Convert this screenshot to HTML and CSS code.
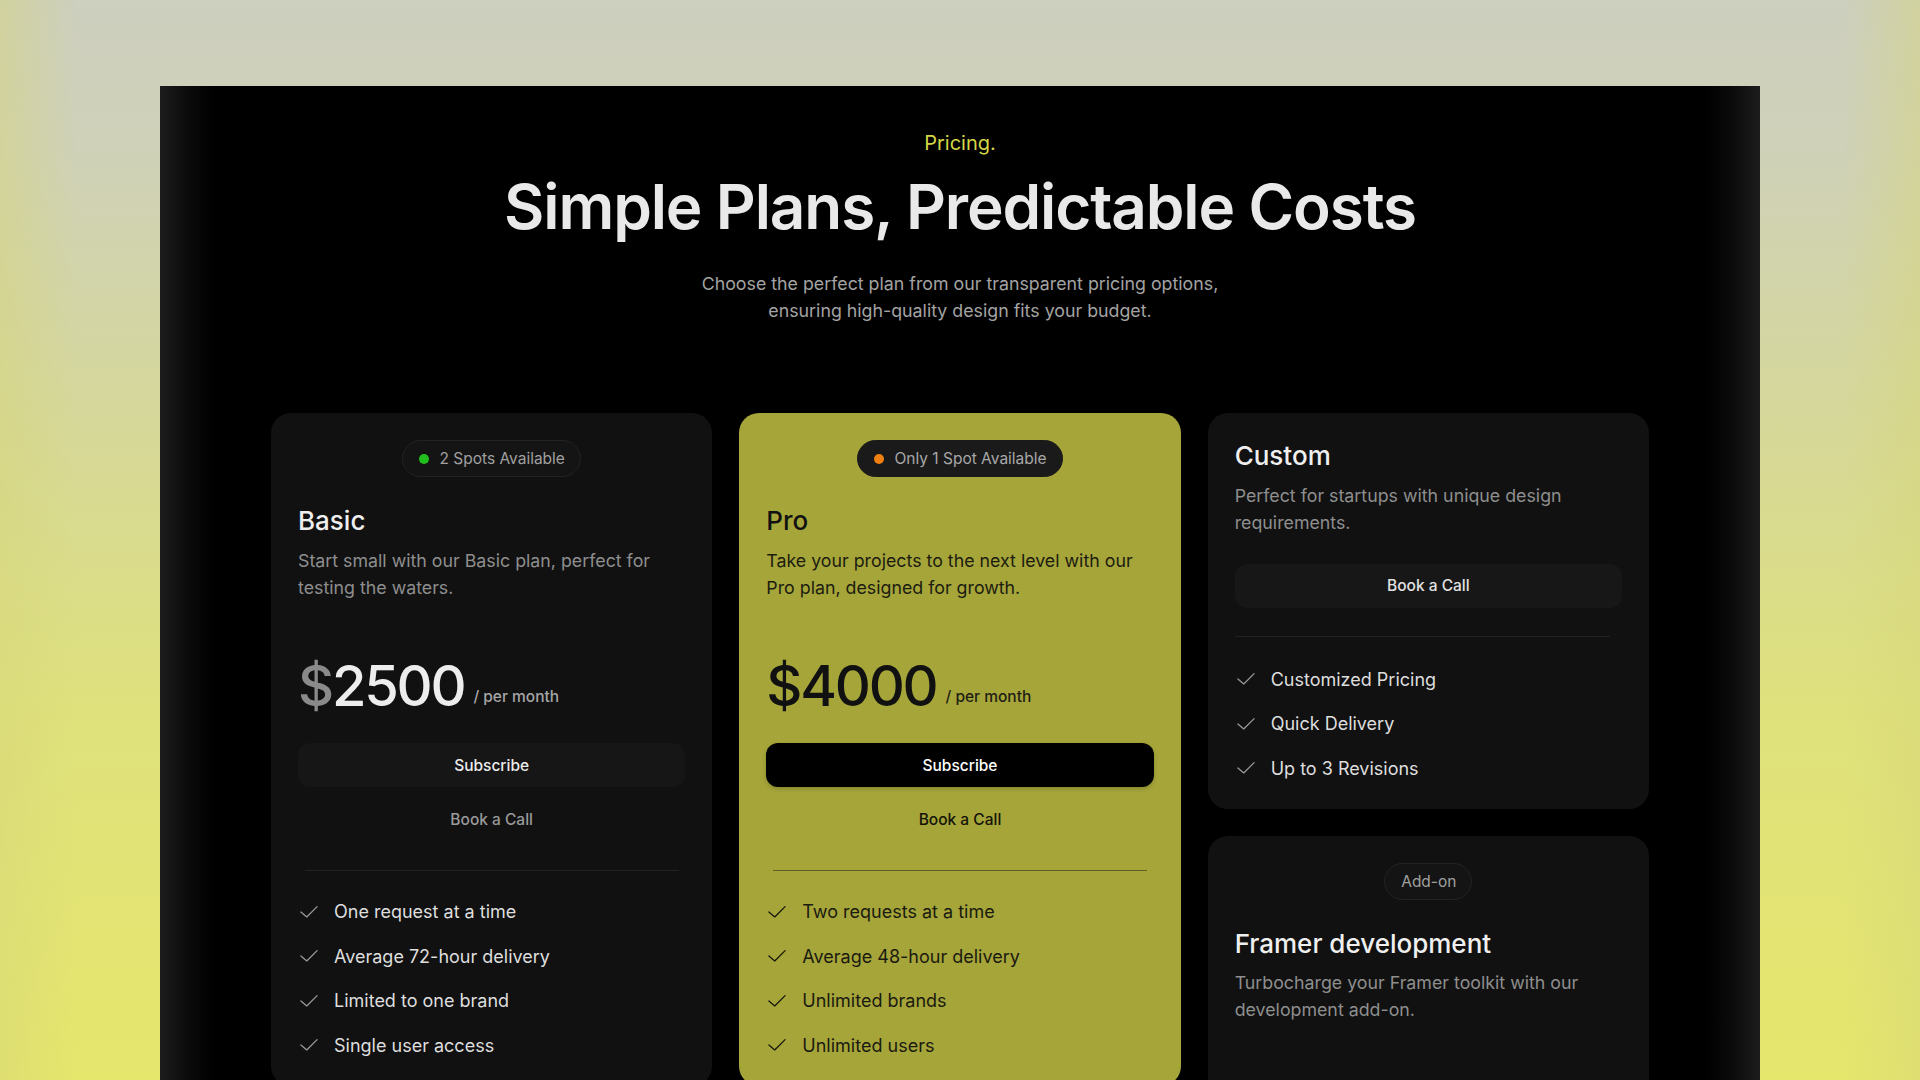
FILE: index.html
```html
<!DOCTYPE html>
<html lang="en">
<head>
<meta charset="utf-8">
<title>Pricing</title>
<link rel="stylesheet" href="styles.css">
</head>
<body>
<main class="panel">
  <header class="intro">
    <p class="eyebrow">Pricing.</p>
    <h1 class="headline">Simple Plans, Predictable Costs</h1>
    <p class="lead">Choose the perfect plan from our transparent pricing options,<br>ensuring high-quality design fits your budget.</p>
  </header>

  <section class="plans">
    <article class="card">
      <div class="pill"><span class="dot dot-green"></span>2 Spots Available</div>
      <h2 class="plan-title">Basic</h2>
      <p class="plan-desc">Start small with our Basic plan, perfect for testing the waters.</p>
      <div class="price"><span class="amount"><span class="currency">$</span>2500</span><span class="per">/ per month</span></div>
      <button class="btn btn-solid">Subscribe</button>
      <button class="btn btn-ghost">Book a Call</button>
      <div class="divider"></div>
      <ul class="features">
        <li><svg class="check" viewBox="0 0 20 14"><polyline points="1,7 7.5,12.5 19,1"/></svg>One request at a time</li>
        <li><svg class="check" viewBox="0 0 20 14"><polyline points="1,7 7.5,12.5 19,1"/></svg>Average 72-hour delivery</li>
        <li><svg class="check" viewBox="0 0 20 14"><polyline points="1,7 7.5,12.5 19,1"/></svg>Limited to one brand</li>
        <li><svg class="check" viewBox="0 0 20 14"><polyline points="1,7 7.5,12.5 19,1"/></svg>Single user access</li>
      </ul>
    </article>

    <article class="card card-pro">
      <div class="pill pill-dark"><span class="dot dot-orange"></span>Only 1 Spot Available</div>
      <h2 class="plan-title">Pro</h2>
      <p class="plan-desc">Take your projects to the next level with our Pro plan, designed for growth.</p>
      <div class="price"><span class="amount"><span class="currency">$</span>4000</span><span class="per">/ per month</span></div>
      <button class="btn btn-solid">Subscribe</button>
      <button class="btn btn-ghost">Book a Call</button>
      <div class="divider"></div>
      <ul class="features">
        <li><svg class="check" viewBox="0 0 20 14"><polyline points="1,7 7.5,12.5 19,1"/></svg>Two requests at a time</li>
        <li><svg class="check" viewBox="0 0 20 14"><polyline points="1,7 7.5,12.5 19,1"/></svg>Average 48-hour delivery</li>
        <li><svg class="check" viewBox="0 0 20 14"><polyline points="1,7 7.5,12.5 19,1"/></svg>Unlimited brands</li>
        <li><svg class="check" viewBox="0 0 20 14"><polyline points="1,7 7.5,12.5 19,1"/></svg>Unlimited users</li>
      </ul>
    </article>

    <div class="stack">
      <article class="card card-custom">
        <h2 class="plan-title plan-title-first">Custom</h2>
        <p class="plan-desc">Perfect for startups with unique design requirements.</p>
        <button class="btn btn-solid btn-call">Book a Call</button>
        <div class="divider divider-left"></div>
        <ul class="features">
          <li><svg class="check" viewBox="0 0 20 14"><polyline points="1,7 7.5,12.5 19,1"/></svg>Customized Pricing</li>
          <li><svg class="check" viewBox="0 0 20 14"><polyline points="1,7 7.5,12.5 19,1"/></svg>Quick Delivery</li>
          <li><svg class="check" viewBox="0 0 20 14"><polyline points="1,7 7.5,12.5 19,1"/></svg>Up to 3 Revisions</li>
        </ul>
      </article>
      <article class="card card-addon">
        <div class="pill">Add-on</div>
        <h2 class="plan-title">Framer development</h2>
        <p class="plan-desc">Turbocharge your Framer toolkit with our development add-on.</p>
      </article>
    </div>
  </section>
</main>
</body>
</html>
```

FILE: styles.css
```css
* { box-sizing: border-box; }

html, body {
  margin: 0;
  height: 1080px;
  overflow: hidden;
}

body {
  font-family: "Inter", "Noto Sans", sans-serif;
  background:
    linear-gradient(90deg, rgba(214, 214, 120, 0.45) 0, rgba(214, 214, 120, 0) 4%, rgba(214, 214, 120, 0) 96%, rgba(214, 214, 120, 0.45) 100%),
    linear-gradient(180deg, #cdcfbf 0%, #cfd1b8 14%, #d6d898 40%, #dfe17c 66%, #e5e66c 100%);
}

.panel {
  width: 1600px;
  margin: 86px auto 0;
  min-height: 1100px;
  padding-top: 43px;
  background: linear-gradient(90deg, #1d1d1d 0, #0a0a0a 30px, #000 55px, #000 calc(100% - 55px), #0a0a0a calc(100% - 30px), #1d1d1d 100%);
}

.intro { text-align: center; }

.eyebrow {
  margin: 0;
  font-size: 20px;
  line-height: 28px;
  color: #d5d646;
}

.headline {
  margin: 13px 0 0;
  font-size: 62px;
  line-height: 1.2;
  font-weight: 600;
  letter-spacing: -0.018em;
  color: #e9e9e9;
}

.lead {
  margin: 26px 0 0;
  font-size: 17.8px;
  line-height: 27px;
  color: #a3a3a3;
}

.plans {
  width: 1378px;
  margin: 89px auto 0;
  display: grid;
  grid-template-columns: repeat(3, 1fr);
  gap: 27px;
  align-items: start;
}

.stack {
  display: flex;
  flex-direction: column;
  gap: 27px;
}

.card {
  background: #111111;
  border-radius: 20px;
  padding: 27px 27px 27px;
  display: flex;
  flex-direction: column;
  color: #efefef;
}

.card-addon { min-height: 300px; }

.pill {
  align-self: center;
  height: 37px;
  padding: 0 15px 0 16px;
  border-radius: 999px;
  background: #141414;
  border: 1px solid #232323;
  display: flex;
  align-items: center;
  gap: 10px;
  font-size: 15.5px;
  color: #a0a0a0;
}

.pill-dark {
  background: #1a1a1a;
  border-color: #1a1a1a;
  color: #a8a8a8;
}

.dot {
  width: 10px;
  height: 10px;
  border-radius: 50%;
}
.dot-green { background: #20bf1c; }
.dot-orange { background: #f0800f; }

.plan-title {
  margin: 28px 0 0;
  font-size: 26px;
  line-height: 1.2;
  font-weight: 500;
}
.plan-title-first { margin-top: 0; }

.plan-desc {
  margin: 10px 0 0;
  font-size: 17.8px;
  line-height: 27px;
  color: #8e8e8e;
}

.price {
  margin-top: 52px;
  line-height: 1.2;
  white-space: nowrap;
}

.amount {
  font-size: 56px;
  font-weight: 500;
  letter-spacing: -0.04em;
  color: #ededed;
}
.currency { color: #8a8a8a; }

.per {
  margin-left: 9px;
  font-size: 15.5px;
  font-weight: 500;
  vertical-align: 4px;
  color: #a5a5a5;
}

.btn {
  display: block;
  width: 100%;
  height: 44px;
  border: 0;
  border-radius: 12px;
  font-family: inherit;
  font-size: 15.5px;
  font-weight: 500;
  cursor: pointer;
}

.btn-solid {
  margin-top: 23.5px;
  background: #161616;
  color: #ececec;
}

.btn-ghost {
  margin-top: 10px;
  background: transparent;
  color: #9a9a9a;
}

.btn-call {
  margin-top: 28px;
  background: #171717;
  color: #e2e2e2;
}

.divider {
  margin: 29px auto 0;
  width: 374px;
  height: 1px;
  background: #222222;
}
.divider-left { margin: 28px 0 0; width: 375px; }

.features {
  list-style: none;
  margin: 27px 0 0;
  padding: 0;
  display: flex;
  flex-direction: column;
  gap: 17.5px;
}
.card-custom .features { margin-top: 29px; }

.features li {
  display: flex;
  align-items: center;
  gap: 14px;
  font-size: 18px;
  line-height: 27px;
  color: #dedede;
}

.check {
  flex: none;
  width: 22px;
  height: 14px;
  padding: 0 2px;
  fill: none;
  stroke: #9a9a9a;
  stroke-width: 1.4;
  stroke-linecap: round;
  stroke-linejoin: round;
}

/* Pro card */
.card-pro {
  background: #a6a53a;
  color: #111;
}
.card-pro .plan-desc { color: #1c1c10; }
.card-pro .amount, .card-pro .currency { color: #111; }
.card-pro .per { color: #1e1e14; }
.card-pro .btn-solid {
  background: #000;
  color: #fff;
  box-shadow: 0 2px 4px rgba(0, 0, 0, 0.18);
}
.card-pro .btn-ghost { color: #141408; }
.card-pro .divider { background: #5f5e28; }
.card-pro .features li { color: #1a1a10; }
.card-pro .check { stroke: #15150a; }
```
